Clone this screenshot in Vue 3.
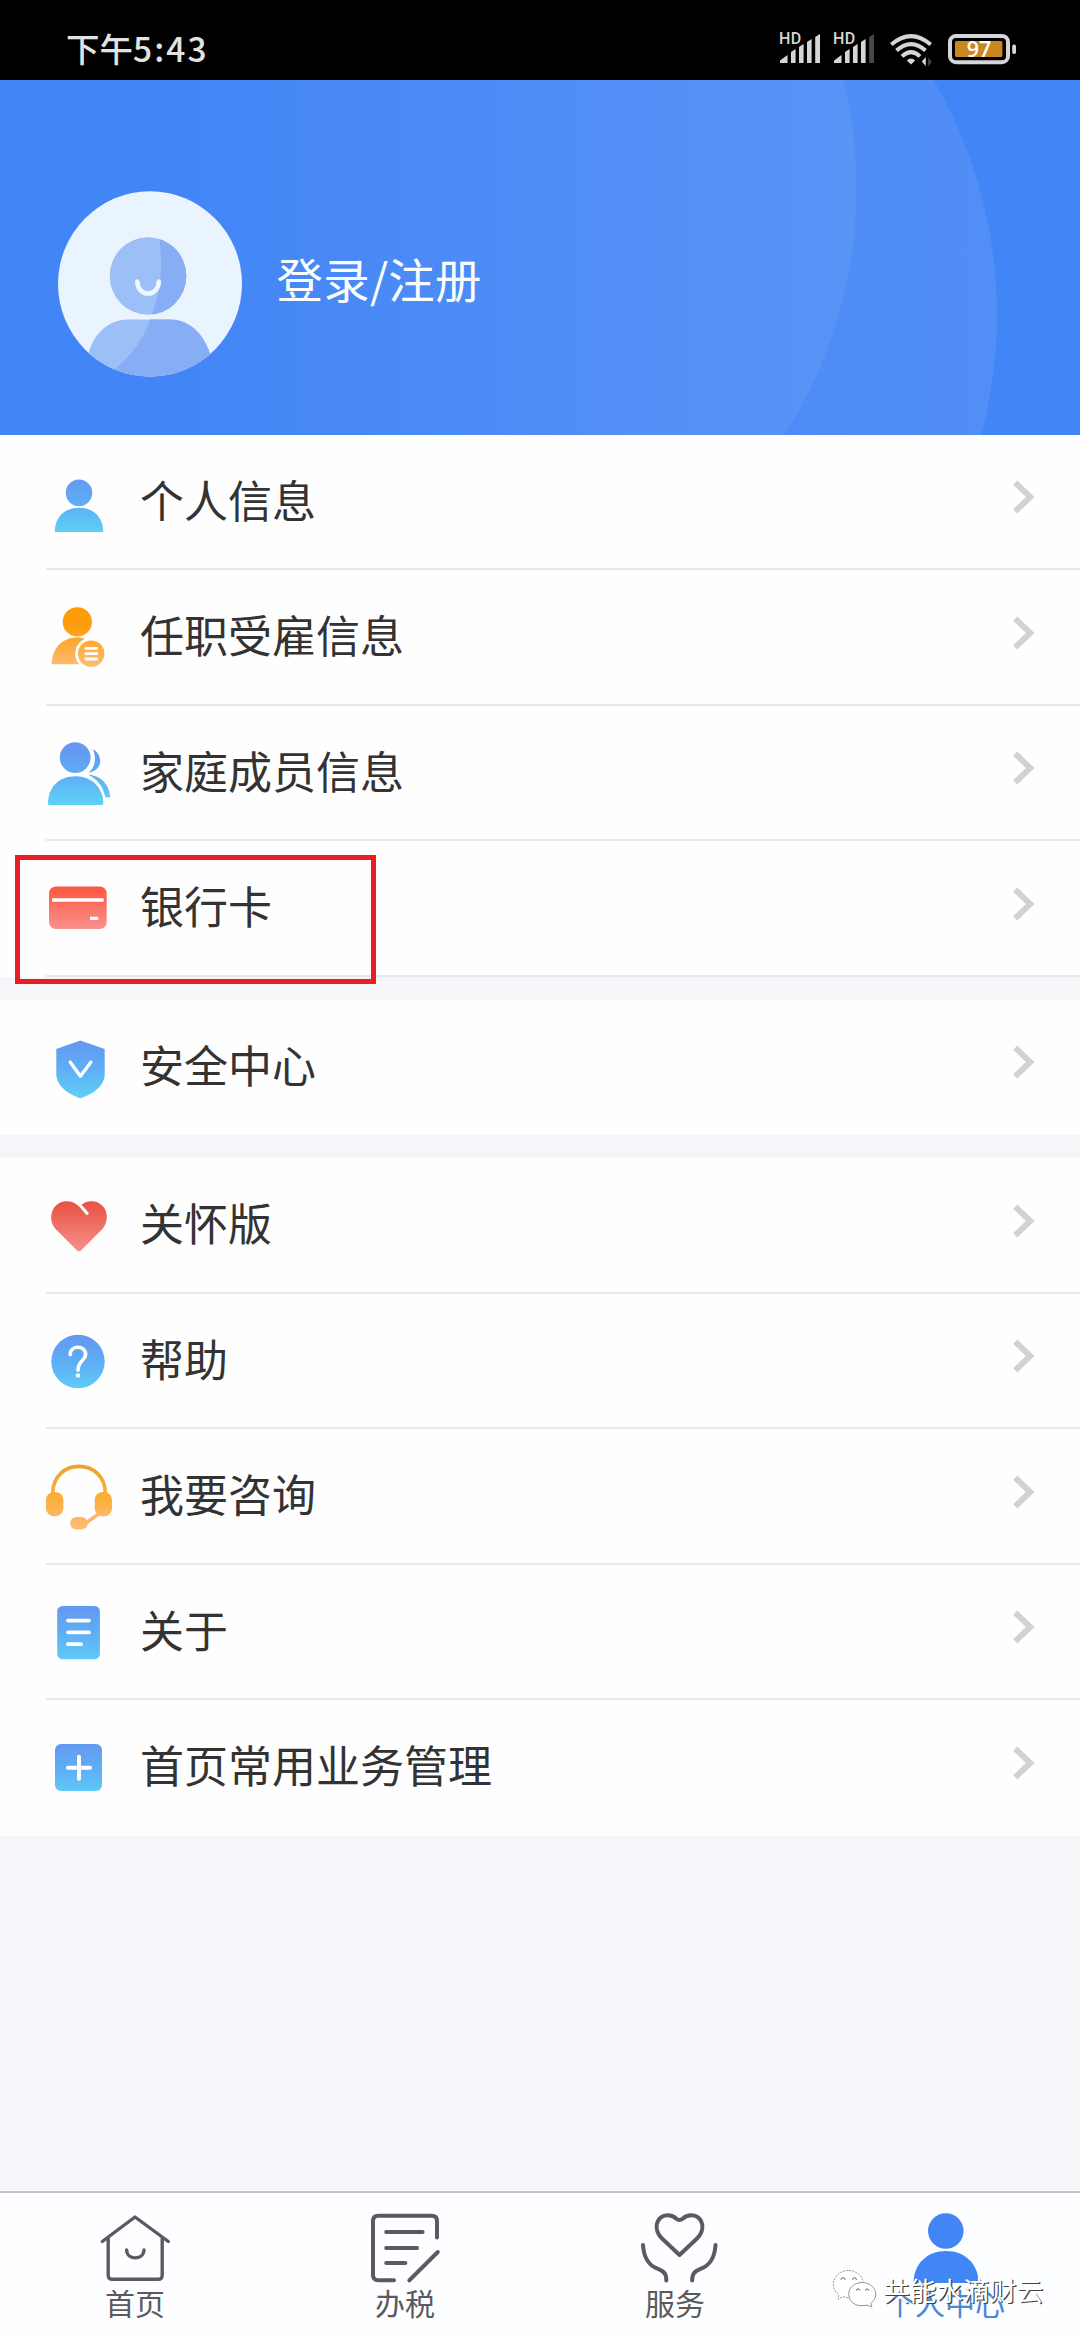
<script setup>
const groups = [
  [
    { label: '个人信息', icon: 'person' },
    { label: '任职受雇信息', icon: 'employment' },
    { label: '家庭成员信息', icon: 'family' },
    { label: '银行卡', icon: 'card', marked: true }
  ],
  [{ label: '安全中心', icon: 'shield' }],
  [
    { label: '关怀版', icon: 'heart' },
    { label: '帮助', icon: 'help' },
    { label: '我要咨询', icon: 'headset' },
    { label: '关于', icon: 'about' },
    { label: '首页常用业务管理', icon: 'plus' }
  ]
]

const signals = [
  { id: 1, last: '#d6d6d6' },
  { id: 2, last: '#484848' }
]
</script>

<template>
  <div class="screen">
    <div class="status">
      <div class="time">下午<span class="digits">5:43</span></div>
      <div class="indicators">
        <svg v-for="s in signals" :key="s.id" class="signal" width="54" height="80" viewBox="0 0 54 80">
          <text x="0" y="44.4" class="hd">HD</text>
          <g fill="#d6d6d6">
            <path d="M1 63V60.5L8.5 55V63Z" />
            <path d="M12 63V52L16.6 49V63Z" />
            <path d="M20 63V47L24.6 44V63Z" />
            <path d="M28 63V42L32.6 39V63Z" />
          </g>
          <path d="M36.2 63V37L41 34V63Z" :fill="s.last" />
        </svg>
        <svg class="wifi" width="46" height="80" viewBox="888 0 46 80">
          <g fill="none" stroke="#d6d6d6" stroke-width="4">
            <path d="M891.3 44.6Q911 27.6 930.7 44.6" />
            <path d="M896.5 50.6Q911 37.6 925.5 50.6" />
            <path d="M902 56.4Q911 48 920 56.4" />
          </g>
          <path d="M906.8 60.6Q911 56.4 915.2 60.6L911 64.4Z" fill="#d6d6d6" />
          <path d="M925.8 57V66L921.8 61.5Z" fill="#d6d6d6" />
          <path d="M928.2 66.5V57.5L931.8 62Z" fill="#484848" />
        </svg>
        <svg class="battery" width="70" height="80" viewBox="947 0 70 80">
          <rect x="950" y="36" width="58" height="26.2" rx="6" fill="none" stroke="#d6d6d6" stroke-width="4" />
          <rect x="955" y="41" width="47.4" height="16" rx="1.5" fill="#c98720" />
          <rect x="1012.2" y="44.5" width="3.8" height="9.6" rx="1.8" fill="#d6d6d6" />
          <text x="979" y="57.4" text-anchor="middle" class="level">97</text>
        </svg>
      </div>
    </div>

    <header class="hero">
      <svg class="rings" width="1080" height="355" viewBox="0 80 1080 355">
        <defs>
          <linearGradient id="ring-outer" gradientUnits="userSpaceOnUse" x1="150" y1="0" x2="997" y2="0">
            <stop offset="0" stop-color="#fff" stop-opacity="0" />
            <stop offset="1" stop-color="#fff" stop-opacity="0.08" />
          </linearGradient>
          <linearGradient id="ring-inner" gradientUnits="userSpaceOnUse" x1="150" y1="0" x2="856" y2="0">
            <stop offset="0" stop-color="#fff" stop-opacity="0" />
            <stop offset="1" stop-color="#fff" stop-opacity="0.06" />
          </linearGradient>
        </defs>
        <circle cx="529" cy="315" r="468" fill="url(#ring-outer)" />
        <circle cx="395.5" cy="188" r="461" fill="url(#ring-inner)" />
      </svg>
      <svg class="avatar" width="184" height="186" viewBox="58 191.5 184 186">
        <defs>
          <clipPath id="avatar-disc"><ellipse cx="150" cy="284.4" rx="92" ry="92.6" /></clipPath>
          <clipPath id="avatar-shape">
            <ellipse cx="148" cy="276.5" rx="38.3" ry="38.8" />
            <path d="M87 362C90 337 107 320 128 320H170C191 320 207 337 212 362V380H87Z" />
          </clipPath>
        </defs>
        <ellipse cx="150" cy="284.4" rx="92" ry="92.6" fill="#eaf4fe" />
        <g clip-path="url(#avatar-disc)">
          <g clip-path="url(#avatar-shape)">
            <rect x="58" y="190" width="184" height="190" fill="#9dbff8" />
            <path d="M158 230C163 262 162 285 153 312C145 338 133 355 112 372V385H245V230Z" fill="#87adf5" />
          </g>
        </g>
        <path d="M137.3 282C137.5 298 158.5 298 158.8 282" fill="none" stroke="#eef6ff" stroke-width="4.6" stroke-linecap="round" />
      </svg>
      <div class="login">登录/注册</div>
    </header>

    <main>
      <svg class="defs" width="0" height="0">
        <defs>
          <linearGradient id="blue" gradientUnits="userSpaceOnUse" x1="0" y1="40" x2="0" y2="98">
            <stop offset="0" stop-color="#6497f1" />
            <stop offset="0.5" stop-color="#5eaef5" />
            <stop offset="1" stop-color="#5fd0f6" />
          </linearGradient>
          <linearGradient id="orange" gradientUnits="userSpaceOnUse" x1="0" y1="38" x2="0" y2="98">
            <stop offset="0" stop-color="#fd9b03" />
            <stop offset="0.35" stop-color="#fd9f12" />
            <stop offset="1" stop-color="#fdbd78" />
          </linearGradient>
          <linearGradient id="amber" gradientUnits="userSpaceOnUse" x1="0" y1="36" x2="0" y2="100">
            <stop offset="0" stop-color="#eaa42c" />
            <stop offset="0.5" stop-color="#fdae38" />
            <stop offset="1" stop-color="#fdbc78" />
          </linearGradient>
          <linearGradient id="red" gradientUnits="userSpaceOnUse" x1="0" y1="45" x2="0" y2="90">
            <stop offset="0" stop-color="#fd5640" />
            <stop offset="1" stop-color="#fb938f" />
          </linearGradient>
          <linearGradient id="rose" gradientUnits="userSpaceOnUse" x1="0" y1="43" x2="0" y2="94">
            <stop offset="0" stop-color="#ea5042" />
            <stop offset="1" stop-color="#f6928a" />
          </linearGradient>
        </defs>
      </svg>
      <section v-for="(group, g) in groups" :key="g" class="group">
        <div v-for="(row, i) in group" :key="row.label" class="row" :class="{ plain: g > 0 && i === group.length - 1 }">
          <svg class="icon" width="94" height="133.6" viewBox="46 0 94 133.6">
            <g v-if="row.icon === 'person'" fill="url(#blue)">
              <circle cx="79" cy="57.8" r="13.3" />
              <path d="M54.7 97C54.7 82 65 72.7 79 72.7S103.3 82 103.3 97Z" />
            </g>
            <g v-else-if="row.icon === 'employment'">
              <circle cx="77.3" cy="51.9" r="14.6" fill="url(#orange)" />
              <path d="M51.7 94.2C52 78 62 67.4 77.2 67.4C90 67.4 99 78 99.5 94.2Z" fill="url(#orange)" />
              <circle cx="91.2" cy="83.6" r="16" fill="#fff" />
              <circle cx="91.2" cy="83.6" r="13.2" fill="url(#orange)" />
              <path d="M85.8 78.3H96.8M85.8 83.7H96.8M85.8 89H96.8" stroke="#fff" stroke-width="2.8" stroke-linecap="round" />
            </g>
            <g v-else-if="row.icon === 'family'" fill="url(#blue)">
              <circle cx="75.2" cy="51.6" r="15.4" />
              <path d="M48 97.6C48 81 59 70.2 75.5 70.2S103.3 82 103.3 97.6Q103.3 99 101.8 99H49.5Q48 99 48 97.6Z" />
              <path d="M93 43.3C98 46 100.2 51 100.2 55C100.2 61 95 66 88.5 66.6C96 61 96 50 93 43.3Z" />
              <path d="M88 68.6C101 69.5 109.5 79 110.2 91.2H105.4C103 81 98 73.5 88 68.6Z" />
            </g>
            <g v-else-if="row.icon === 'card'">
              <rect x="49" y="45.4" width="57.7" height="42.6" rx="7" fill="url(#red)" />
              <path d="M52 59H103.7M90 77.4H98.3" stroke="#fff" stroke-width="3.4" />
            </g>
            <g v-else-if="row.icon === 'shield'">
              <path d="M80.3 40.5L104.7 49V74C104.7 86 93 94 80.3 98.3C68 94 56.3 86 56.3 74V49Z" fill="url(#blue)" />
              <path d="M70.3 62.2L80.4 76.2L90.8 62.2" fill="none" stroke="#fff" stroke-width="3.3" stroke-linecap="round" stroke-linejoin="round" />
            </g>
            <g v-else-if="row.icon === 'heart'">
              <path d="M76.5 91.9L55.8 71.2C47.8 62 51.2 49.5 59 45.2C66 41.8 73.5 43.2 79.2 48.6C84.8 43.2 92.5 41.8 99 45.2C107.4 49.5 110 62 102.2 71.2L81.5 91.9Q79 94.6 76.5 91.9Z" fill="url(#rose)" />
              <path d="M78.6 45.5L87.2 55.4" stroke="#fff" stroke-width="3" stroke-linecap="round" />
            </g>
            <g v-else-if="row.icon === 'help'">
              <circle cx="78" cy="67.5" r="26.7" fill="url(#blue)" />
              <path d="M70.2 60.8C70.2 50.6 85.8 50.9 85.6 60.4C85.4 67 78 66.5 78 76.3" fill="none" stroke="#fff" stroke-width="3.6" stroke-linecap="round" />
              <circle cx="78" cy="81.4" r="2.2" fill="#fff" />
            </g>
            <g v-else-if="row.icon === 'headset'">
              <path d="M52.8 66V64C53 28.5 105 28.5 105.3 64V66" fill="none" stroke="url(#amber)" stroke-width="3.7" />
              <rect x="46" y="62.9" width="17.4" height="24.4" rx="8" fill="url(#amber)" />
              <rect x="94.7" y="62.9" width="17.3" height="24.4" rx="8" fill="url(#amber)" />
              <path d="M86 94L98.6 85" stroke="#fdb868" stroke-width="3.4" />
              <rect x="70.2" y="88" width="17.4" height="12.4" rx="6" fill="url(#amber)" />
            </g>
            <g v-else-if="row.icon === 'about'">
              <rect x="57.2" y="40.9" width="42.7" height="53.4" rx="5.5" fill="url(#blue)" />
              <path d="M68 55.6H89M68 67.3H89M68 79.2H81" stroke="#fff" stroke-width="3.8" stroke-linecap="round" />
            </g>
            <g v-else>
              <rect x="55" y="44" width="47" height="47" rx="6" fill="url(#blue)" />
              <path d="M68 67.7H90M79 56.7V78.7" stroke="#fff" stroke-width="4" stroke-linecap="round" />
            </g>
          </svg>
          <span class="label">{{ row.label }}</span>
          <svg class="chevron" width="22" height="34" viewBox="0 0 22 34">
            <path d="M2.2 2.6L17.2 17L2.2 31.4" fill="none" stroke="#d2d2d4" stroke-width="6" />
          </svg>
          <div v-if="row.marked" class="mark"></div>
        </div>
      </section>
    </main>

    <nav class="tabs">
      <div class="tab">
        <svg width="270" height="95" viewBox="0 2193 270 95">
          <g fill="none" stroke="#5a5a61" stroke-width="3.4" stroke-linecap="round" stroke-linejoin="round">
            <path d="M102.3 2241.5L135 2217L168.3 2241.5" />
            <path d="M108.2 2239V2275Q108.2 2279.3 112.5 2279.3H158Q162.2 2279.3 162.2 2275V2239" />
            <path d="M126.6 2250C127 2260.5 143.5 2260.5 144 2250" />
          </g>
        </svg>
        <span>首页</span>
      </div>
      <div class="tab">
        <svg width="270" height="95" viewBox="270 2193 270 95">
          <g fill="none" stroke="#5a5a61" stroke-width="4" stroke-linecap="round" stroke-linejoin="round">
            <path d="M437 2237.5V2221Q437 2215.7 431.7 2215.7H378.3Q373 2215.7 373 2221V2275Q373 2280.2 378.3 2280.2H394" />
            <path d="M386.2 2232H422.6M386.2 2248H417M386.2 2263H405.4M409.3 2280.3L437.8 2252" />
          </g>
        </svg>
        <span>办税</span>
      </div>
      <div class="tab">
        <svg width="270" height="95" viewBox="540 2193 270 95">
          <g fill="none" stroke="#5a5a61" stroke-width="4" stroke-linecap="round" stroke-linejoin="round">
            <path d="M679.5 2255L661.5 2238C656 2232 655.5 2225 658.5 2220C663 2213.5 672 2214.5 676 2218.5Q679.5 2221.5 683 2218.5C687 2214.5 696 2213.5 700.5 2220C703.5 2225 703 2232 697.5 2238Z" />
            <path d="M643 2245C643.8 2258 649 2265.5 657.5 2268.7C664.5 2271.5 666.5 2274 666.3 2280.5" />
            <path d="M715.5 2245C714.7 2258 709.5 2265.5 701 2268.7C694 2271.5 692 2274 692.2 2280.5" />
          </g>
        </svg>
        <span>服务</span>
      </div>
      <div class="tab active">
        <svg width="270" height="95" viewBox="810 2193 270 95">
          <circle cx="945.8" cy="2231" r="17.8" fill="#4285f5" />
          <path d="M913.5 2283C913.5 2264 927 2251 946 2251S978.5 2264 978.5 2283Z" fill="#4285f5" />
        </svg>
        <span>个人中心</span>
      </div>
      <div class="watermark">
        <svg width="46" height="40" viewBox="832 2270 46 40">
          <g fill="#fff" stroke="#8a8a8a" stroke-width="0.9" stroke-linejoin="round">
            <path d="M848.5 2271.5C839.5 2271.5 833.4 2278 833.4 2285.5C833.4 2290 835.5 2293.5 839 2296L838 2300L843.2 2297.7C856 2301.5 863.5 2294 863.5 2285.5C863.5 2278 857 2271.5 848.5 2271.5Z" stroke-dasharray="2 1.2" />
            <path d="M862.3 2283.5C854 2283.5 848.7 2289 848.7 2295.2C848.7 2303 856 2308.5 866.8 2306.2L872 2308L870.8 2304.4C874 2302 875.8 2299 875.8 2295.2C875.8 2289 870 2283.5 862.3 2283.5Z" />
            <path d="M841 2280.8A2 2 0 0 1 845 2280.8M852.5 2280.8A2 2 0 0 1 856.5 2280.8M856.3 2291.6A1.7 1.7 0 0 1 859.7 2291.6M865.4 2291.6A1.7 1.7 0 0 1 868.8 2291.6" fill="none" stroke="#555" />
          </g>
        </svg>
        <span>共能水滴财云</span>
      </div>
    </nav>
  </div>
</template>

<style>
body {
  margin: 0;
  background: #f4f5fa;
}
</style>

<style scoped>
.screen {
  width: 1080px;
  height: 2340px;
  display: flex;
  flex-direction: column;
  overflow: hidden;
  background: #f4f6fa;
  font-family: "Noto Sans CJK SC", sans-serif;
}
.status {
  height: 80px;
  flex: none;
  display: flex;
  justify-content: space-between;
  align-items: center;
  background: #000;
  color: #e2e2e2;
}
.time {
  padding: 15px 0 0 66px;
  font-size: 33.5px;
  line-height: 65px;
  height: 65px;
  font-weight: 500;
}
.digits {
  letter-spacing: 2.1px;
}
.indicators {
  display: flex;
  padding-right: 63px;
}
.hd {
  font: 500 16px Roboto, sans-serif;
  letter-spacing: 0.3px;
  fill: #d6d6d6;
}
.level {
  font: 600 21.5px "Open Sans", sans-serif;
  fill: #fff;
}
.wifi {
  margin-left: 1px;
}
.battery {
  margin-left: 13px;
}
.hero {
  position: relative;
  height: 354.5px;
  flex: none;
  display: flex;
  align-items: center;
  box-sizing: border-box;
  padding: 54px 0 0 58px;
  background: #4285f6;
}
.rings {
  position: absolute;
  left: 0;
  top: 0;
}
.avatar {
  position: relative;
}
.login {
  position: relative;
  margin: -13px 0 0 34.5px;
  font-size: 46.4px;
  letter-spacing: 0.3px;
  color: #fbfdff;
  line-height: 60px;
}
main {
  flex: 1;
  display: flex;
  flex-direction: column;
  gap: 22.8px;
}
.defs {
  position: absolute;
}
.group {
  background: #fefefe;
}
.row {
  position: relative;
  display: flex;
  height: 135.6px;
  margin-left: 46px;
  border-bottom: 2px solid #e6e7ea;
  box-sizing: border-box;
}
.row.plain {
  border-bottom-color: transparent;
}
.icon {
  flex: none;
}
.label {
  flex: 1;
  font-size: 44px;
  line-height: 129px;
  height: 129px;
  color: #333;
  white-space: nowrap;
}
.chevron {
  margin: 45.5px 45px 0 0;
}
.mark {
  position: absolute;
  left: -31px;
  top: 14px;
  width: 361px;
  height: 129px;
  box-sizing: border-box;
  border: 5px solid #ec1c26;
  z-index: 2;
}
.tabs {
  position: relative;
  height: 149px;
  flex: none;
  box-sizing: border-box;
  display: flex;
  border-top: 2px solid #c2c4ca;
  background: #fdfeff;
}
.tab {
  width: 270px;
  display: flex;
  flex-direction: column;
  align-items: center;
  color: #5a5a60;
  font-size: 30px;
  line-height: 29px;
}
.tab.active {
  color: #4787d8;
}
.watermark {
  position: absolute;
  left: 832px;
  top: 76px;
  display: flex;
  gap: 5px;
  color: #fff;
}
.watermark span {
  font-size: 26.7px;
  line-height: 42px;
  white-space: nowrap;
  text-shadow: 1.3px 1.3px 0.5px #444;
}
</style>
